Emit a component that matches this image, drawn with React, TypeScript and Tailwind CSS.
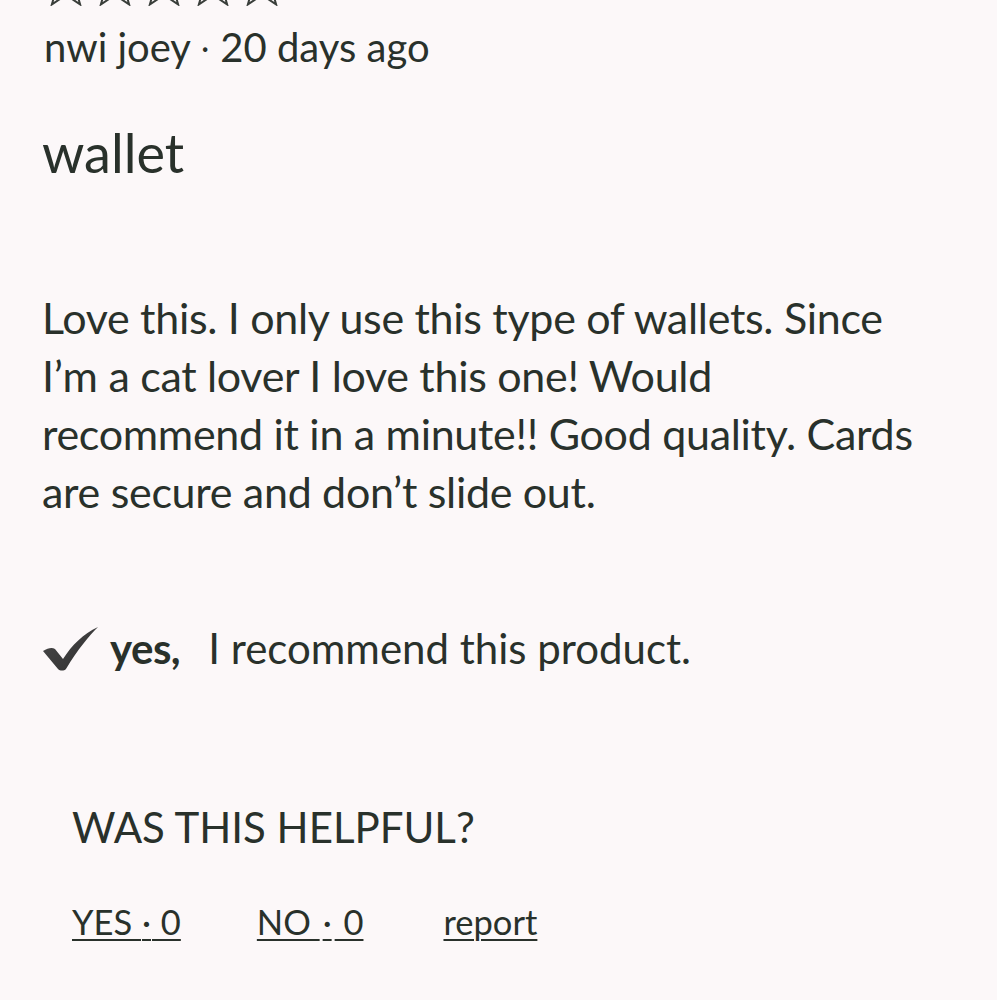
import React from "react";

function starPoints(cx: number, cy: number, R: number, r: number) {
  const pts: string[] = [];
  for (let i = 0; i < 10; i++) {
    const ang = ((-90 + i * 36) * Math.PI) / 180;
    const rad = i % 2 === 0 ? R : r;
    pts.push(`${(cx + rad * Math.cos(ang)).toFixed(2)},${(cy + rad * Math.sin(ang)).toFixed(2)}`);
  }
  return pts.join(" ");
}

export default function App() {
  const centers = [66, 115, 164, 213, 262];
  return (
    <div
      className="min-h-[1000px] w-full bg-[#fcf8f9] text-[#29312b]"
      style={{ fontFamily: "Lato, 'Liberation Sans', sans-serif" }}
    >
      <svg width="300" height="6" className="block" viewBox="0 0 300 6">
        {centers.map((c) => (
          <polygon
            key={c}
            points={starPoints(c, -15, 24, 10)}
            fill="none"
            stroke="#3a3f3b"
            strokeWidth="2"
            strokeLinejoin="miter"
          />
        ))}
      </svg>
      <div className="pl-[42px]">
        <div className="mt-[18px] pl-[2px] text-[40px] leading-[47px] whitespace-nowrap">
          nwi joey <span className="mx-[1px] text-[30px] align-[3px]">·</span> 20 days ago
        </div>
        <div className="mt-[49px] text-[54px] leading-[65px]">wallet</div>
        <p className="mt-[104px] text-[43px] leading-[58px] tracking-[-0.3px] whitespace-nowrap">
          Love this. I only use this type of wallets. Since
          <br />
          I’m a cat lover I love this one! Would
          <br />
          recommend it in a minute!! Good quality. Cards
          <br />
          are secure and don’t slide out.
        </p>
        <div className="mt-[102px] flex items-center text-[42px] leading-[50px] whitespace-nowrap">
          <svg width="57" height="44" viewBox="0 0 57 44" className="mr-[11px] mt-[2px]">
            <defs>
              <linearGradient id="chk" x1="0" y1="0" x2="1" y2="1">
                <stop offset="0" stopColor="#4a4a4a" />
                <stop offset="1" stopColor="#2f2f2f" />
              </linearGradient>
            </defs>
            <path
              d="M1 24 C6 21 10 20 13 22 L21 32 C30 18 41 7 56 0 C47 9 36 22 24 42 C22 44 18 44 16 42 Z"
              fill="url(#chk)"
            />
          </svg>
          <span className="font-bold tracking-[-0.5px]">yes,</span>
          <span className="ml-[28px]">I recommend this product.</span>
        </div>
        <div className="pl-[30px]">
          <div className="mt-[129px] text-[42px] leading-[50px] whitespace-nowrap">WAS THIS HELPFUL?</div>
          <div className="mt-[50px] flex text-[34.5px] leading-[40px] whitespace-nowrap">
            <span className="underline decoration-2 underline-offset-[4px]">
              YES <span className="mx-[1px]">·</span> 0
            </span>
            <span className="ml-[76px] underline decoration-2 underline-offset-[4px]">
              NO <span className="mx-[3px]">·</span> 0
            </span>
            <span className="ml-[80px] underline decoration-2 underline-offset-[4px]">report</span>
          </div>
        </div>
      </div>
    </div>
  );
}
